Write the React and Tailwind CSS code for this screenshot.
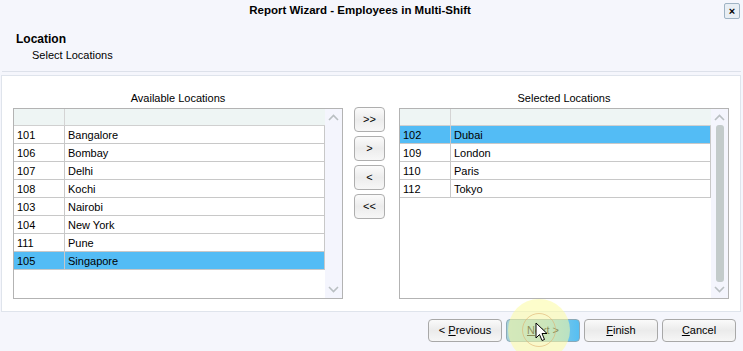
import React from "react";

const font = { fontFamily: '"Liberation Sans", Arial, sans-serif' };

const available = [
  ["101", "Bangalore"],
  ["106", "Bombay"],
  ["107", "Delhi"],
  ["108", "Kochi"],
  ["103", "Nairobi"],
  ["104", "New York"],
  ["111", "Pune"],
  ["105", "Singapore"],
];
const selected = [
  ["102", "Dubai"],
  ["109", "London"],
  ["110", "Paris"],
  ["112", "Tokyo"],
];

function Chevron({ up }) {
  return (
    <svg width="11" height="7" viewBox="0 0 11 7">
      <path
        d={up ? "M1 6 L5.5 1.5 L10 6" : "M1 1 L5.5 5.5 L10 1"}
        fill="none"
        stroke="#b9bfc2"
        strokeWidth="1.6"
      />
    </svg>
  );
}

function ListBox({ rows, selIndex, thumb }) {
  return (
    <div className="flex h-[191px] w-[330px] border border-[#b3b3b3] bg-white">
      <div className="flex flex-1 flex-col">
        <div className="flex h-[17px] border-b border-[#d0d0d0] bg-[#eef5f4]">
          <div className="w-[51px] border-r border-[#d4d4d4]" />
          <div className="flex-1" />
        </div>
        {rows.map(([code, name], i) => (
          <div
            key={code}
            className={`flex h-[18px] items-center border-b border-r border-[#c8c8c8] pt-[2px] text-[11px] text-black ${
              i === selIndex ? "bg-[#53bcf5]" : "bg-white"
            }`}
          >
            <div className="-mt-[2px] flex h-[18px] w-[51px] items-center border-r border-[#c8c8c8] pl-[3px] pt-[2px]">
              {code}
            </div>
            <div className="pl-[3px]">{name}</div>
          </div>
        ))}
      </div>
      <div className="flex w-[17px] flex-col items-center bg-[#f4f5fd] py-[5px]">
        <Chevron up />
        <div className="my-[4px] flex-1 w-[8px]">
          {thumb && <div className="h-full w-full rounded-[3px] bg-[#c3cbcb]" />}
        </div>
        <Chevron />
      </div>
    </div>
  );
}

function MoveBtn({ label }) {
  return (
    <div className="flex h-[25px] w-[31px] items-center justify-center rounded-[4px] border border-[#aeaeae] bg-gradient-to-b from-[#fbfbfb] via-[#ececec] to-[#f7f7f7] text-[11px] text-black">
      {label}
    </div>
  );
}

function FootBtn({ children, hover }) {
  return (
    <div
      className={`flex h-[23px] w-[74px] items-center justify-center rounded-[4px] border text-[11px] text-black ${
        hover
          ? "border-[#8aa9b8] bg-gradient-to-r from-[#a6d2d9] via-[#93cbd9] to-[#55bff3]"
          : "border-[#a8a8a8] bg-gradient-to-b from-[#fafafa] via-[#ebebeb] to-[#f6f6f6]"
      }`}
    >
      {children}
    </div>
  );
}

export default function App() {
  return (
    <div
      className="relative h-[351px] w-[743px] overflow-hidden bg-[#f5f6fc] text-black"
      style={font}
    >
      {/* title bar */}
      <div className="flex h-[21px] items-center pt-[1px]">
        <div className="flex-1" />
        <div className="mr-[20px] text-[11.5px] font-bold">Report Wizard - Employees in Multi-Shift</div>
        <div className="flex flex-1 justify-end pr-[3px]">
          <div className="flex h-[16px] w-[16px] items-center justify-center rounded-[2px] border border-[#9fb3c4] bg-[#e8eef4] text-[11px] font-bold leading-none">
            ×
          </div>
        </div>
      </div>

      {/* header */}
      <div className="pl-[16px] pt-[11px]">
        <div className="text-[12px] font-bold leading-[14px]">Location</div>
        <div className="pl-[16px] pt-[3px] text-[11px] leading-[13px]">Select Locations</div>
      </div>

      <div className="mx-[2px] mt-[9px] h-[1px] bg-[#dde1ea]" />

      {/* panel */}
      <div className="ml-[1px] mr-[2px] mt-[3px] h-[237px] border border-[#dfe4ec] bg-white pl-[11px] pt-[15px]">
        <div className="flex">
          <div className="flex flex-col">
            <div className="h-[17px] pt-[1px] text-center text-[11px] leading-[13px]">Available Locations</div>
            <ListBox rows={available} selIndex={7} />
          </div>
          <div className="ml-[11px] mr-[14px] flex flex-col gap-[4px] pt-[16px]">
            <MoveBtn label=">>" />
            <MoveBtn label=">" />
            <MoveBtn label="<" />
            <MoveBtn label="<<" />
          </div>
          <div className="flex flex-col">
            <div className="h-[17px] pt-[1px] text-center text-[11px] leading-[13px]">Selected Locations</div>
            <ListBox rows={selected} selIndex={0} thumb />
          </div>
        </div>
      </div>

      {/* footer */}
      <div className="flex justify-end gap-[4px] pr-[7px] pt-[7px]">
        <FootBtn>
          &lt;&nbsp;<span className="underline">P</span>revious
        </FootBtn>
        <FootBtn hover>
          <span className="underline">N</span>ext &gt;
        </FootBtn>
        <FootBtn>
          <span className="underline">F</span>inish
        </FootBtn>
        <FootBtn>
          <span className="underline">C</span>ancel
        </FootBtn>
      </div>

      {/* cursor halo + pointer */}
      <div className="pointer-events-none absolute left-[508px] top-[299px] h-[62px] w-[62px] rounded-full bg-[#fbfba0] opacity-55" />
      <div className="pointer-events-none absolute left-[522px] top-[313px] h-[34px] w-[34px] rounded-full border border-[#e0b070] opacity-60" />
      <svg className="pointer-events-none absolute left-[535px] top-[322px]" width="13" height="20" viewBox="0 0 13 20">
        <path d="M1 1 L1 16 L4.5 12.5 L7 18.5 L9.5 17.5 L7 11.5 L12 11.5 Z" fill="white" stroke="black" strokeWidth="1" />
      </svg>
    </div>
  );
}
